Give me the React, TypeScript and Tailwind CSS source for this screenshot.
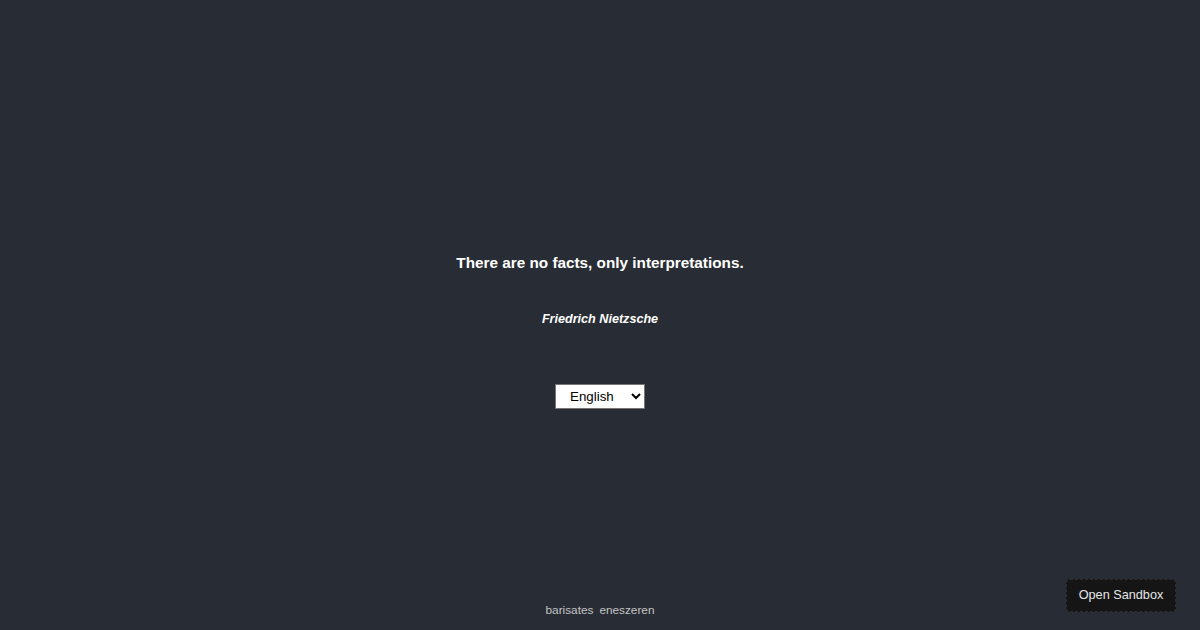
import { useState } from "react";

const App = () => {
  const [lang, setLang] = useState("en");

  return (
    <div className="relative h-[630px] w-full bg-[#282c34] text-white flex flex-col items-center font-['Liberation_Sans',Arial,sans-serif]">
      {/* Quote */}
      <div className="flex-1 flex flex-col items-center pt-[254px]">
        <p className="text-[15.3px] leading-[18px] font-bold">
          There are no facts, only interpretations.
        </p>
        <p className="mt-[40px] text-[12.6px] leading-[15px] font-bold italic">
          Friedrich Nietzsche
        </p>
        <select
          value={lang}
          onChange={(e) => setLang(e.target.value)}
          className="mt-[57px] w-[90px] h-[25px] bg-white text-black text-[13.33px] pl-[10px] pr-[4px] border border-[#767676]"
        >
          <option value="en">English</option>
          <option value="tr">Türkçe</option>
        </select>
      </div>

      {/* Footer */}
      <footer className="pb-[13px] flex gap-[6px] text-[11.8px] leading-[14px] text-[#c4c4c4]">
        <a href="#">barisates</a>
        <a href="#">eneszeren</a>
      </footer>

      <button className="absolute right-[24px] bottom-[18px] w-[110px] h-[33px] pt-[1px] rounded-[4px] bg-[#151515] border border-dashed border-[#2e2e2e] text-[12.7px] text-[#e6e6e6]">
        Open Sandbox
      </button>
    </div>
  );
};

export default App;
